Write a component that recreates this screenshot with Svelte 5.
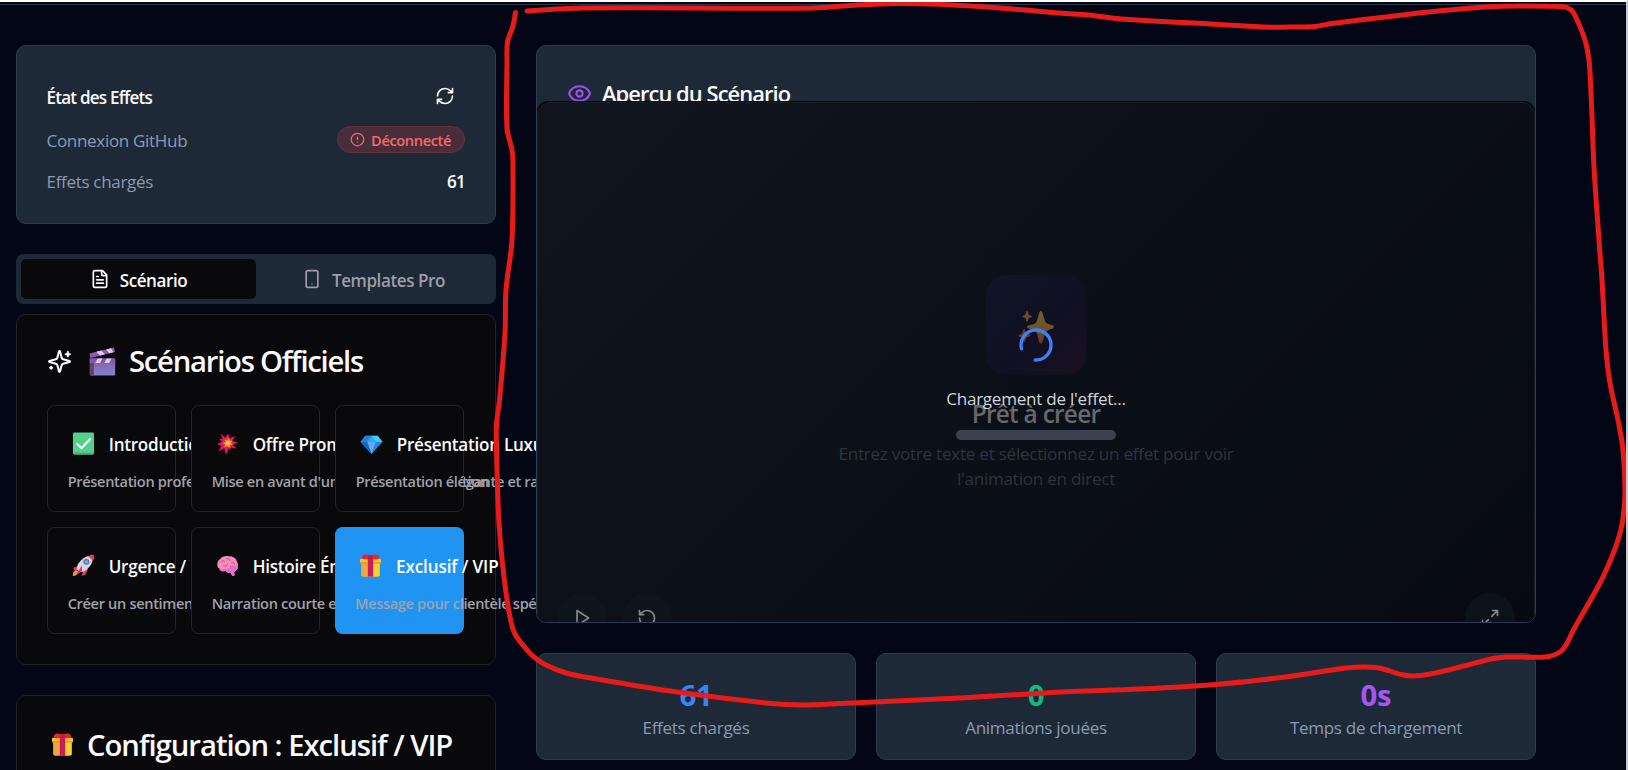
<script>
  const scenarios = [
    { icon: 'check', title: 'Introduction', desc: 'Présentation professionnelle' },
    { icon: 'burst', title: 'Offre Promotion', desc: "Mise en avant d'un produit ou promotion" },
    { icon: 'gem', title: 'Présentation Luxueuse', desc: 'Présentation élégante et raffinée' },
    { icon: 'rocket', title: 'Urgence /', desc: "Créer un sentiment d'urgence" },
    { icon: 'brain', title: 'Histoire Émotionnelle', desc: 'Narration courte et touchante' },
    { icon: 'gift', title: 'Exclusif / VIP', desc: 'Message pour clientèle spéciale', selected: true }
  ];

  const stats = [
    { value: '61', label: 'Effets chargés', tone: 'blue' },
    { value: '0', label: 'Animations jouées', tone: 'green' },
    { value: '0s', label: 'Temps de chargement', tone: 'purple' }
  ];

  // Freehand annotation stroke, smoothed into cubic segments.
  const stroke = [[515.5,12.5],[513,26],[507.5,42],[507,60],[507,128],[512,150],[513,162],[512,240],[506,290],[505,333],[499.5,400],[496.5,425],[496.5,450],[499,523],[504,577],[510,617],[515,634],[527,650],[534,657],[546,665],[566,673],[591,678],[677,692],[766,703],[802,705],[840,703.5],[960,698],[1060,692],[1140,689],[1216,684.5],[1285,677],[1346,668],[1364,667],[1379,668],[1401,674.5],[1413,676],[1430,674],[1460,667],[1491,659],[1506,657],[1535,657.3],[1549,656.5],[1560,652],[1566,645],[1574.5,628],[1583.6,612],[1600,583],[1611,559],[1618,540],[1622.5,522],[1625,493],[1623,450],[1618,420],[1610,383],[1606,350],[1602,280],[1599,240],[1594,167],[1591,93],[1589,60],[1585,40],[1578,22],[1573,12],[1567,7.5],[1560,6.5],[1495,6.5],[1433,11.5],[1386,17],[1332,23.5],[1315,26.5],[1300,27],[1263,27],[1194,23],[1121,19],[1089,15],[1060,13],[1000,8],[939,4.3],[896,3.5],[857,5],[813,8],[582,8],[527,11]];

  function smooth(p) {
    let d = `M${p[0][0]} ${p[0][1]}`;
    for (let i = 0; i < p.length - 1; i++) {
      const a = p[i - 1] ?? p[i], b = p[i], c = p[i + 1], e = p[i + 2] ?? c;
      const len = Math.hypot(c[0] - b[0], c[1] - b[1]);
      const t1 = Math.hypot(c[0] - a[0], c[1] - a[1]) || 1;
      const t2 = Math.hypot(e[0] - b[0], e[1] - b[1]) || 1;
      const k = len / 3;
      d += ` C${(b[0] + (c[0] - a[0]) / t1 * k).toFixed(1)} ${(b[1] + (c[1] - a[1]) / t1 * k).toFixed(1)} ${(c[0] - (e[0] - b[0]) / t2 * k).toFixed(1)} ${(c[1] - (e[1] - b[1]) / t2 * k).toFixed(1)} ${c[0]} ${c[1]}`;
    }
    return d;
  }
</script>

{#snippet pict(name)}
  <svg class="pict" viewBox="0 0 24 24" aria-hidden="true">
    {#if name === 'check'}
      <rect x="1" y="0.5" width="22" height="23" rx="1.5" fill="#55d08a" />
      <path d="M1 21.5h22v.5a1.5 1.5 0 0 1-1.500 1.500h-19a1.500 1.500 0 0 1-1.500-1.500z" fill="#42b47a" />
      <path d="M5.500 12.500l4.500 4.500 9-10" fill="none" stroke="#fff" stroke-width="2.200" stroke-linecap="round" stroke-linejoin="round" />
    {:else if name === 'burst'}
      <path d="M4.500 1l5 5 3.500-4.500.8 5.200 6.200-2.200-3 5 6 1.500-5.500 2.500 4 4-6-1.300-.8 2.800-1.700-2-2.800 7-1.500-7-6.200 3 3.300-5.500L1 12.500l5.300-2.200L3 7l4 .3z" fill="#e9185f" />
      <path d="M9 7.500l2.500 1.300L13.500 6l.8 3.200 3-.2-1.800 2.500 2.300 2-3-.2-.8 3.200-2.500-2-3 1.500 1-3-2.500-1.800 2.700-.5z" fill="#ff9c1e" />
      <path d="M11 10l2-.8.8 1.400 1.200 1-1.500.9-.9 1.500-1.100-1.200-1.500-.8z" fill="#ffd23a" />
    {:else if name === 'gem'}
      <path d="M5.500 4h13L23.500 10.500 12 23 .5 10.500z" fill="#1f86e0" />
      <path d="M5.500 4L12 4 7.500 10.500H.500z" fill="#2c7fd4" />
      <path d="M12 4h6.500l5 6.500h-7z" fill="#35d0ff" />
      <path d="M12 4l4.500 6.500h-9z" fill="#22aef4" />
      <path d="M7.500 10.500h9L12 23z" fill="#66a9f2" />
      <path d="M.500 10.500h7L12 23z" fill="#1467c4" />
    {:else if name === 'rocket'}
      <path d="M7 12L1.500 14.500 3 18l5-2zM12 17l-2 6 4-1.500 3-6.500z" fill="#ef3b5b" />
      <path d="M2 18.500c1.500-2 4-1.500 4.500 0S4.500 23 1 23c-.300-2 .200-3.500 1-4.500z" fill="#f2932e" />
      <path d="M21.500 2c1 5-1.500 11-8.500 16l-5 1-3-3 1-5C10 4.500 16 1.200 21.500 2z" fill="#d9d3e2" />
      <path d="M17 2.300C18.500.7 21 .300 22.800 1c.700 2.500 0 4.800-1 6z" fill="#f0365f" />
      <circle cx="15" cy="8.200" r="3.100" fill="#5d6b95" /><circle cx="15" cy="8.200" r="2" fill="#58b4f3" />
      <path d="M10 12l-3.500 6.500L5 20l1.500.5 4-3z" fill="#e3325c" />
    {:else if name === 'brain'}
      <path d="M4 5.500C6.500 2 11 1.500 13.500 2.500c4-.5 7.500 2 8.500 5.500 2 4 1.200 8-1.500 9.500l-1.500 1.500.3 3.500-2.300.5-1.800-3.500c-2.200.7-4-.5-5-2C7 19 4 17.500 3.500 15 .5 13.500.5 8 4 5.500z" fill="#f58cb9" />
      <path d="M3.500 15C4 17.500 7 19 10.200 17.500c1 1.500 2.800 2.700 5 2l1.800 3.500 2.300-.5L19 19l1.500-1.500c2-1.200 3-4 2.200-7-3 4-5.500 4-8 3-3 2-7 3.500-11.200 1.500z" fill="#e96ad0" />
      <path d="M5 8c1.500-1.500 3-1.200 4 0M11 5c2-.8 3.500.5 3.500 2M8 12.500c2 .8 3.500-.300 4-2M16.500 8.500c2-.5 3 1 2.500 2.500M15 13c1.500.8 3 .500 4-.5" fill="none" stroke="#c94f8c" stroke-width="1" stroke-linecap="round" />
    {:else if name === 'gift'}
      <path d="M2.500 9h19v13a1.500 1.500 0 0 1-1.500 1.500H4A1.500 1.500 0 0 1 2.500 22z" fill="#f8bd38" />
      <path d="M2.500 9h6.700v14.500H4A1.500 1.500 0 0 1 2.500 22z" fill="#f2a53d" />
      <path d="M14.800 9h6.700v13a1.500 1.500 0 0 1-1.500 1.500h-5.200z" fill="#fbcf2c" />
      <rect x="1" y="5" width="22" height="4.800" rx="1.200" fill="#f9c632" />
      <path d="M1 8.500h22v.3a1 1 0 0 1-1 1H2a1 1 0 0 1-1-1z" fill="#e08f2d" />
      <rect x="9.200" y="4.500" width="5.600" height="19" fill="#c71f5c" />
      <path d="M3 5c-.500-3 1.500-5 4-4.500 2 .3 3.500 1 5 1s3-.700 5-1c2.500-.500 4.500 1.500 4 4.500-3 .800-6 .500-9 .5s-6 .3-9-.5z" fill="#e4263b" />
      <path d="M9.500 1.200h5v4.300h-5z" fill="#c2202f" />
    {:else if name === 'clap'}
      <defs><linearGradient id="clapfill" x1="0" y1="0" x2="0" y2="1"><stop offset="0" stop-color="#8a5f93" /><stop offset="1" stop-color="#7f82d6" /></linearGradient></defs>
      <rect x="1.500" y="9.500" width="21" height="14" rx="1" fill="url(#clapfill)" />
      <path d="M1.500 9.500H4.800v14H2.500a1 1 0 0 1-1-1z" fill="#5b4668" />
      <path d="M1.500 9.500h21v3.800h-21z" fill="#8c55ab" />
      <path d="M8 9.500h4l-2 3.800H6zM15.500 9.500h4l-2 3.800h-4z" fill="#d9ccf8" />
      <path d="M1.200 5.300L21.500.400l.8 3.700L2 9z" fill="#8f59ad" />
      <path d="M7 3.900l4-1 3 3.100-4 1zM15 2l4-1 2 3.300-3.500.9z" fill="#dccffb" />
    {:else if name === 'stars'}
      <path d="M15 0.500c1.500 0 1.800 6 3.500 8s5.500 1.300 5.500 3-4 1.500-5.500 3.500S16.800 23 15 23s-1.700-6-3.300-8S5.500 13.200 5.500 11.500s4.700-1 6.200-3S13.500.500 15 .500z" fill="url(#starfill)" />
      <path d="M5.500.300c.6 0 .8 2.400 1.300 2.900s2.200.5 2.200 1.100-1.700.6-2.200 1.200S6.100 8 5.500 8s-.700-2-1.200-2.500-2-.5-2-1.200 1.500-.6 2-1.100S4.900.300 5.500.300z" fill="#ef9f2d" />
      <path d="M3.500 12.800c.8 0 1 2.700 1.600 3.300s2.700.5 2.700 1.400-2.100.8-2.700 1.500-.8 3-1.600 3-1-2.400-1.500-3-2.300-.6-2.300-1.500 1.800-.7 2.300-1.400.7-3.300 1.500-3.300z" fill="#e2732f" />
      <defs><linearGradient id="starfill" x1="0" y1="0" x2="0" y2="1"><stop offset="0" stop-color="#f5c92e" /><stop offset=".55" stop-color="#f0b02e" /><stop offset="1" stop-color="#e05f34" /></linearGradient></defs>
    {/if}
  </svg>
{/snippet}

<div class="page">
  <div class="topbar"></div>

  <main>
    <aside>
      <section class="card status">
        <div class="status-head">
          <h3>État des Effets</h3>
          <button class="ghost" aria-label="Actualiser">
            <svg class="ic s20" viewBox="0 0 24 24"><path d="M3 12a9 9 0 0 1 9-9 9.750 9.750 0 0 1 6.740 2.740L21 8M21 3v5h-5M21 12a9 9 0 0 1-9 9 9.750 9.750 0 0 1-6.740-2.740L3 16M8 16H3v5" /></svg>
          </button>
        </div>
        <div class="line">
          <span class="muted">Connexion GitHub</span>
          <span class="pill">
            <svg class="ic s15" viewBox="0 0 24 24"><circle cx="12" cy="12" r="10" /><path d="M12 8v4M12 16h.01" /></svg>
            <span>Déconnecté</span>
          </span>
        </div>
        <div class="line last">
          <span class="muted">Effets chargés</span>
          <strong>61</strong>
        </div>
      </section>

      <nav class="tabs">
        <button class="tab active">
          <svg class="ic s20" viewBox="0 0 24 24"><path d="M15 2H6a2 2 0 0 0-2 2v16a2 2 0 0 0 2 2h12a2 2 0 0 0 2-2V7ZM14 2v4a2 2 0 0 0 2 2h4M10 9H8M16 13H8M16 17H8" /></svg>
          <span>Scénario</span>
        </button>
        <button class="tab">
          <svg class="ic s20" viewBox="0 0 24 24"><rect x="5" y="2" width="14" height="20" rx="2" /><path d="M12 18h.01" /></svg>
          <span>Templates Pro</span>
        </button>
      </nav>

      <section class="panel">
        <h2>
          <svg class="ic s25" viewBox="0 0 24 24"><path d="M9.937 15.500A2 2 0 0 0 8.500 14.063l-6.135-1.582a.500.500 0 0 1 0-.962L8.500 9.936A2 2 0 0 0 9.937 8.500l1.582-6.135a.500.500 0 0 1 .963 0L14.063 8.500A2 2 0 0 0 15.500 9.937l6.135 1.581a.500.500 0 0 1 0 .964L15.500 14.063a2 2 0 0 0-1.437 1.437l-1.582 6.135a.500.500 0 0 1-.963 0zM20 3v4M22 5h-4M4 17v2M5 18H3" /></svg>
          <span class="emoji big">{@render pict('clap')}</span>
          <span class="label">Scénarios Officiels</span>
        </h2>
        <div class="tiles">
          {#each scenarios as s}
            <button class="tile" class:selected={s.selected}>
              <span class="tile-head">
                <span class="emoji">{@render pict(s.icon)}</span>
                <span class="tile-title">{s.title}</span>
              </span>
              <span class="tile-desc">{s.desc}</span>
            </button>
          {/each}
        </div>
      </section>

      <section class="panel config">
        <h2>
          <span class="emoji">{@render pict('gift')}</span>
          <span class="label">Configuration : Exclusif / VIP</span>
        </h2>
      </section>
    </aside>

    <div class="content">
      <section class="card preview">
        <h2>
          <svg class="ic s25" viewBox="0 0 24 24"><path d="M2.062 12.348a1 1 0 0 1 0-.696 10.750 10.750 0 0 1 19.876 0 1 1 0 0 1 0 .696 10.750 10.750 0 0 1-19.876 0" /><circle cx="12" cy="12" r="3" /></svg>
          <span>Aperçu du Scénario</span>
        </h2>
        <div class="stage">
          <div class="canvas">
            <div class="layer ready">
              <div class="badge">{@render pict('stars')}</div>
              <h3>Prêt à créer</h3>
              <p>Entrez votre texte et sélectionnez un effet pour voir<br />l'animation en direct</p>
            </div>
            <div class="layer controls">
              <span class="round"><svg class="ic s20" viewBox="0 0 24 24"><path d="M6 3l14 9-14 9z" /></svg></span>
              <span class="round"><svg class="ic s20" viewBox="0 0 24 24"><path d="M3 12a9 9 0 1 0 9-9 9.750 9.750 0 0 0-6.740 2.740L3 8M3 3v5h5" /></svg></span>
              <span class="round end"><svg class="ic s20" viewBox="0 0 24 24"><path d="M15 3h6v6M21 3l-7 7M9 21H3v-6M3 21l7-7" /></svg></span>
            </div>
            <div class="layer loading">
              <svg class="ic spinner" viewBox="0 0 24 24"><path d="M21 12a9 9 0 1 1-6.219-8.560" transform="rotate(165 12 12)" /></svg>
              <span>Chargement de l'effet...</span>
              <div class="bar"></div>
            </div>
          </div>
        </div>
      </section>

      <div class="stats">
        {#each stats as s}
          <div class="card stat">
            <b class={s.tone}>{s.value}</b>
            <span class="muted">{s.label}</span>
          </div>
        {/each}
      </div>
    </div>
  </main>

  <svg class="annotation" viewBox="0 0 1628 770" aria-hidden="true"><path d={smooth(stroke)} /></svg>
</div>

<style>
  :global(body) { margin: 0; background: #fff; }
  .page {
    position: relative;
    box-sizing: border-box;
    width: 1628px;
    height: 770px;
    overflow: hidden;
    border-top: 2px solid #fff;
    border-right: 2px solid #c6c9ce;
    background: #020615;
    color: #fafafa;
    font-family: "Open Sans", "Noto Sans", sans-serif;
    font-size: 17.06px;
    line-height: 25px;
    letter-spacing: -0.24px;
  }
  .page *, .page *::before { box-sizing: border-box; }
  h2, h3, p { margin: 0; }
  button { font: inherit; color: inherit; background: none; border: 0; padding: 0; }
  .topbar { height: 3px; border-bottom: 1px solid #2b3849; }
  main { display: flex; gap: 40px; padding: 40px 0 0 16px; }
  aside { width: 480px; flex: none; }
  .content { position: relative; z-index: 2; width: 1000px; flex: none; }

  .ic { display: block; flex: none; fill: none; stroke: currentColor; stroke-width: 2; stroke-linecap: round; stroke-linejoin: round; }
  .s15 { width: 15px; height: 15px; }
  .s20 { width: 20px; height: 20px; }
  .s25 { width: 25px; height: 25px; }

  .card { background: #1e2938; border: 1px solid #2f3c4e; border-radius: 10px; }
  .muted { color: #8b9bb1; }

  .status { height: 179px; padding: 30px 30px 30px 29.5px; }
  .status-head { display: flex; align-items: center; justify-content: space-between; height: 40px; margin-bottom: 10px; }
  .status-head h3 { font-size: 17.06px; font-weight: 600; letter-spacing: -0.78px; margin: 1px 0 -1px; }
  .ghost { display: flex; align-items: center; justify-content: center; width: 40px; height: 40px; }
  .line { display: flex; align-items: center; justify-content: space-between; height: 27px; margin-bottom: 15px; }
  .line.last { height: 25px; }
  .line .muted, .line strong { margin: 1px 0 -1px; }
  .line .muted { letter-spacing: -0.33px; }
  .line strong { font-weight: 600; letter-spacing: -0.8px; }
  .pill { display: flex; align-items: center; gap: 6px; height: 27px; padding: 0 13px 0 12px; border: 1px solid #6b2f3c; border-radius: 14px; background: #482d3a; color: #f86a6a; font-size: 14.6px; font-weight: 600; line-height: 20px; letter-spacing: -0.37px; }

  .tabs { display: grid; grid-template-columns: 1fr 1fr; height: 50px; margin-top: 30px; padding: 5px; border-radius: 7.5px; background: #1e2938; color: #9d9ea7; }
  .tab { display: flex; align-items: center; justify-content: center; gap: 10px; border-radius: 5px; font-weight: 600; letter-spacing: -0.42px; }
  .tab span { margin: 1px 0 -1px; }
  .tab.active { background: #09090b; color: #fafafa; }

  .panel { height: 351px; margin-top: 10px; padding: 30px; border: 1px solid #242427; border-radius: 10px; background: #09090b; }
  .panel h2 { display: flex; align-items: center; height: 30px; font-size: 29.25px; line-height: 30px; font-weight: 600; white-space: nowrap; }
  .panel h2 .label { letter-spacing: -1.25px; margin: 1px 0 -1px; }
  .panel h2 .s25 { margin: 2px 15px 0 0; }
  .emoji { display: flex; justify-content: center; width: 30px; flex: none; padding-left: 1px; }
  .pict { display: block; width: 23px; height: 23px; }
  .emoji.big { margin-right: 12px; }
  .emoji.big .pict { width: 29px; height: 29px; margin-top: 2px; }
  .config { margin-top: 30px; }
  .config h2 { height: 36px; }
  .config .emoji { width: 30px; margin-right: 10px; }
  .config h2 .label { letter-spacing: -1.02px; }

  .tiles { display: grid; grid-template-columns: repeat(3, minmax(0, 1fr)); gap: 15px; margin: 30px 1px 0 0; }
  .tile { display: flex; flex-direction: column; align-items: flex-start; gap: 10px; height: 107px; padding: 20px 19.7px; border: 1px solid #252528; border-radius: 7.5px; background: #09090b; white-space: nowrap; text-align: left; }
  .tile.selected { border: 0; padding: 21px 20px; background: #2094f3; color: #fff; }
  .tile-head { display: flex; align-items: center; gap: 11px; height: 35px; }
  .tile-title { font-weight: 600; letter-spacing: -0.24px; margin: 1px 0 -1px; }
  .tile.selected .tile-title { letter-spacing: -0.1px; }
  .tile-desc { height: 20px; font-size: 14.6px; line-height: 21px; font-weight: 600; letter-spacing: -0.34px; color: #a1a1aa; }

  .preview { position: relative; height: 578px; padding: 30px; overflow: hidden; }
  .preview h2 { display: flex; align-items: center; gap: 10px; height: 35px; font-size: 21.9px; font-weight: 600; letter-spacing: -0.93px; }
  .preview h2 .ic { color: #a24df0; }
  .stage { position: absolute; inset: 55px 0 0; background: #05080d; border-radius: 11px 11px 0 0; padding-top: 1px; }
  .canvas { position: relative; height: 520px; border: 1px solid #1b1f25; border-bottom: 0; border-radius: 14px 14px 0 0; background: linear-gradient(135deg, #10151d, #070a12); overflow: hidden; }
  .layer { position: absolute; inset: 0; display: flex; flex-direction: column; align-items: center; }
  .ready { padding-top: 172px; text-align: center; }
  .badge { display: flex; align-items: center; justify-content: center; width: 100px; height: 100px; border-radius: 20px; background: linear-gradient(135deg, #0d1726, #110f23 55%, #181122); }
  .badge .pict { width: 37px; height: 35px; opacity: 0.42; margin-top: 4px; overflow: visible; }
  .ready h3 { margin-top: 21px; height: 34px; line-height: 36px; font-size: 24.4px; font-weight: 600; letter-spacing: -0.72px; color: #66686e; }
  .ready p { width: 450px; margin-top: 11px; color: #2e343e; }
  .controls { flex-direction: row; align-items: flex-start; gap: 15px; padding: 490px 19px 0; color: #85878c; }
  .round { display: flex; align-items: center; justify-content: center; flex: none; width: 50px; height: 50px; border-radius: 50%; background: #0d141b; }
  .round.end { margin-left: auto; background: #0c1219; }
  .loading { padding-top: 222px; color: #d1d5db; }
  .spinner { width: 40px; height: 40px; color: #3b82f6; margin-bottom: 21px; }
  .bar { width: 160px; height: 10px; margin-top: 19px; border-radius: 5px; background: #3a4252; }

  .stats { display: grid; grid-template-columns: repeat(3, 1fr); gap: 20px; margin-top: 30px; }
  .stat { display: flex; flex-direction: column; align-items: center; height: 107px; padding: 21px 20px 19px; }
  .stat b { height: 40px; font-size: 29.25px; line-height: 41px; font-weight: 700; letter-spacing: -0.2px; }
  .stat .muted { letter-spacing: -0.3px; }
  .blue { color: #3b82f6; }
  .green { color: #10b981; }
  .purple { color: #a855f7; }

  .annotation { position: absolute; left: 0; top: -2px; width: 1628px; height: 770px; z-index: 5; overflow: visible; pointer-events: none; }
  .annotation path { fill: none; stroke: #e81b1b; stroke-width: 5; stroke-linecap: round; stroke-linejoin: round; }
</style>
